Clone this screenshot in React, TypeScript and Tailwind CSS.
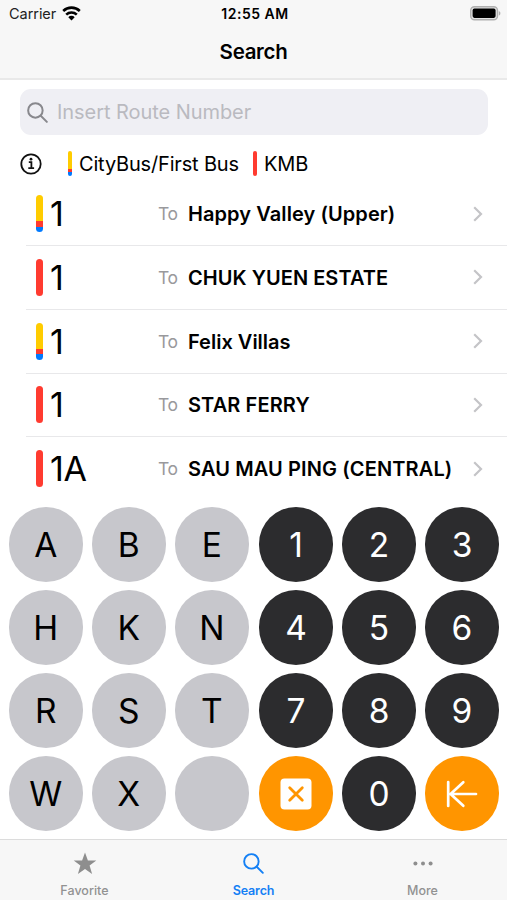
import type { ReactNode } from "react";

type Operator = "ctb" | "kmb";

const routes: { no: string; dest: string; op: Operator; tracking: string }[] = [
  { no: "1", dest: "Happy Valley (Upper)", op: "ctb", tracking: "tracking-[0.08px]" },
  { no: "1", dest: "CHUK YUEN ESTATE", op: "kmb", tracking: "tracking-[0.04px]" },
  { no: "1", dest: "Felix Villas", op: "ctb", tracking: "tracking-[0px]" },
  { no: "1", dest: "STAR FERRY", op: "kmb", tracking: "tracking-[0.1px]" },
  { no: "1A", dest: "SAU MAU PING (CENTRAL)", op: "kmb", tracking: "tracking-[0.12px]" },
];

const letterKeys = ["A", "B", "E", "H", "K", "N", "R", "S", "T", "W", "X", ""];
const numberKeys = ["1", "2", "3", "4", "5", "6", "7", "8", "9", "clear", "0", "back"];

function OperatorBar({ op, className }: { op: Operator; className: string }) {
  return (
    <span className={`flex shrink-0 flex-col overflow-hidden rounded-full ${className}`}>
      {op === "kmb" ? (
        <span className="flex-1 bg-[#ff3b30]" />
      ) : (
        <>
          <span className="h-[70%] bg-[#ffcc00]" />
          <span className="h-[15%] bg-[#ff3b30]" />
          <span className="h-[15%] bg-[#007aff]" />
        </>
      )}
    </span>
  );
}

function Wifi() {
  return (
    <svg width="19" height="15" viewBox="0 0 19 15" fill="none" stroke="#000" strokeWidth="2.6">
      <path d="M1.2 5a12 12 0 0 1 16.6 0" />
      <path d="M4.2 8.6a7.7 7.7 0 0 1 10.6 0" />
      <path d="M9.5 14.4 6.3 11.2a4.5 4.5 0 0 1 6.4 0Z" fill="#000" stroke="none" />
    </svg>
  );
}

function Battery() {
  return (
    <svg width="31" height="15" viewBox="0 0 31 15">
      <rect x="0.7" y="0.7" width="26.8" height="13.1" rx="3.8" fill="#e4e4e4" stroke="#b0b0b0" strokeWidth="1.4" />
      <rect x="2.6" y="2.6" width="23" height="9.3" rx="1.8" fill="#000" />
      <path d="M28.8 5v4.6c1-.4 1.6-1.3 1.6-2.3s-.6-1.9-1.6-2.3Z" fill="#b0b0b0" />
    </svg>
  );
}

function Magnifier({ size, stroke }: { size: number; stroke: number }) {
  return (
    <svg width={size} height={size} viewBox="0 0 20 20" fill="none" stroke="currentColor" strokeWidth={stroke} strokeLinecap="round">
      <circle cx="8" cy="8" r="6.9" />
      <path d="m13.1 13.1 5.8 5.8" />
    </svg>
  );
}

function Key({ className, children }: { className: string; children?: ReactNode }) {
  return (
    <button className={`flex size-[74.4px] items-center justify-center rounded-full text-[33.5px] font-[390] leading-none ${className}`}>
      {children}
    </button>
  );
}

function keyFace(key: string) {
  if (key === "clear") {
    return (
      <svg width="32" height="32" viewBox="0 0 32 32">
        <rect x="0.5" y="0.5" width="31" height="31" rx="4" fill="#fff" />
        <path d="m9.7 9.7 12.6 12.6M22.3 9.7 9.7 22.3" stroke="#ff9500" strokeWidth="2.8" strokeLinecap="round" />
      </svg>
    );
  }
  if (key === "back") {
    return (
      <svg width="32" height="28" viewBox="0 0 32 28" fill="none" stroke="#fff" strokeWidth="2.7" strokeLinecap="round" strokeLinejoin="round">
        <path d="M2.2 2v24M30 14H4M17.3 2.2 4.6 14l12.7 11.8" />
      </svg>
    );
  }
  return <span className="pt-[2px]">{key}</span>;
}

function Tab({ label, className, children }: { label: string; className: string; children: ReactNode }) {
  return (
    <div className={`flex flex-1 flex-col items-center ${className}`}>
      <div className="flex h-[43px] items-center pt-[4px]">{children}</div>
      <span className="text-[12.5px] leading-4">{label}</span>
    </div>
  );
}

export default function App() {
  return (
    <div className="flex h-[900px] w-[507px] flex-col overflow-hidden bg-white font-['Inter','Liberation_Sans',sans-serif] text-black">
      <header className="h-[80px] shrink-0 border-b-2 border-[#e9e9e9] bg-[#f7f7f7]">
        <div className="flex h-[27px] items-center pl-[9px] pr-[6px]">
          <div className="flex flex-1 items-center gap-[6px]">
            <span className="text-[14.5px] tracking-[-0.05px] text-[#222]">Carrier</span>
            <Wifi />
          </div>
          <span className="text-[14px] font-semibold tracking-[0.5px]">12:55 AM</span>
          <div className="flex flex-1 justify-end">
            <Battery />
          </div>
        </div>
        <h1 className="pt-[11px] text-center text-[20.5px] font-semibold leading-7 tracking-[-0.3px]">Search</h1>
      </header>

      <div className="ml-[20px] mr-[19px] mt-[9px] flex h-[46px] shrink-0 items-center gap-[9px] rounded-[11px] bg-[#efeff4] pl-[7px]">
        <span className="text-[#88888d]">
          <Magnifier size={21} stroke={1.9} />
        </span>
        <span className="text-[20px] tracking-[-0.06px] text-[#babac0]">Insert Route Number</span>
      </div>

      <div className="flex h-[57px] shrink-0 items-center pl-[20px] text-[20px] tracking-[-0.17px]">
        <svg width="22" height="22" viewBox="0 0 22 22" fill="none" stroke="#111" strokeWidth="1.8">
          <circle cx="11" cy="11" r="9.7" />
          <path d="M8.8 9.2h2.6v6M8.3 15.2h5.8" />
          <circle cx="11" cy="6.2" r="1.4" fill="#111" stroke="none" />
        </svg>
        <OperatorBar op="ctb" className="ml-[26px] h-[25px] w-1" />
        <span className="ml-[7px] w-[173px] whitespace-nowrap">CityBus/First Bus</span>
        <OperatorBar op="kmb" className="ml-[1px] h-[25px] w-1" />
        <span className="ml-[7px]">KMB</span>
      </div>

      <ul className="-mt-[9.8px] shrink-0">
        {routes.map((r, i) => (
          <li
            key={i}
            className="ml-[26px] flex h-[63.8px] items-center border-b border-[#e8e8ea] pl-[10px] last:border-transparent"
          >
            <OperatorBar op={r.op} className="h-[37px] w-[7px]" />
            <span className="ml-[7px] w-[108px] pt-px text-[34px] font-[380] leading-none tracking-[-0.4px]">{r.no}</span>
            <span className="w-[30px] pt-px text-[17.5px] tracking-[-0.5px] text-[#99999c]">To</span>
            <span className={`flex-1 whitespace-nowrap pt-px text-[20px] font-semibold ${r.tracking}`}>{r.dest}</span>
            <svg className="mr-[24px]" width="10" height="16" viewBox="0 0 10 16" fill="none" stroke="#c4c4c7" strokeWidth="2.2">
              <path d="m1.2 1.2 6.8 6.8-6.8 6.8" />
            </svg>
          </li>
        ))}
      </ul>

      <div className="mt-[6.3px] flex shrink-0 justify-between pl-[8.6px] pr-[7.8px]">
        <div className="grid grid-cols-3 gap-[8.6px]">
          {letterKeys.map((k, i) => (
            <Key key={i} className="bg-[#c7c7cc] text-black">
              {keyFace(k)}
            </Key>
          ))}
        </div>
        <div className="grid grid-cols-3 gap-[8.6px]">
          {numberKeys.map((k) => (
            <Key key={k} className={k === "clear" || k === "back" ? "bg-[#ff9500]" : "bg-[#2c2c2e] text-white"}>
              {keyFace(k)}
            </Key>
          ))}
        </div>
      </div>

      <nav className="mt-auto flex h-[61px] shrink-0 border-t-[1.5px] border-[#dcdcdc] bg-[#f7f7f7] font-medium text-[#929292]">
        <Tab label="Favorite" className="tracking-[0.02px]">
          <svg width="24" height="23" viewBox="0 0 24 23" fill="#8e8e8e">
            <path d="m12 .5 2.9 8h8.4l-6.7 5.1 2.5 8.3-7.1-5-7.1 5 2.5-8.3L.7 8.5h8.4Z" />
          </svg>
        </Tab>
        <Tab label="Search" className="font-semibold tracking-[-0.15px] text-[#1480f5]">
          <Magnifier size={21} stroke={1.8} />
        </Tab>
        <Tab label="More" className="tracking-[0.02px]">
          <svg width="20" height="5" viewBox="0 0 20 5" fill="#8e8e8e">
            <circle cx="2.4" cy="2.5" r="2" />
            <circle cx="10" cy="2.5" r="2" />
            <circle cx="17.6" cy="2.5" r="2" />
          </svg>
        </Tab>
      </nav>
    </div>
  );
}
